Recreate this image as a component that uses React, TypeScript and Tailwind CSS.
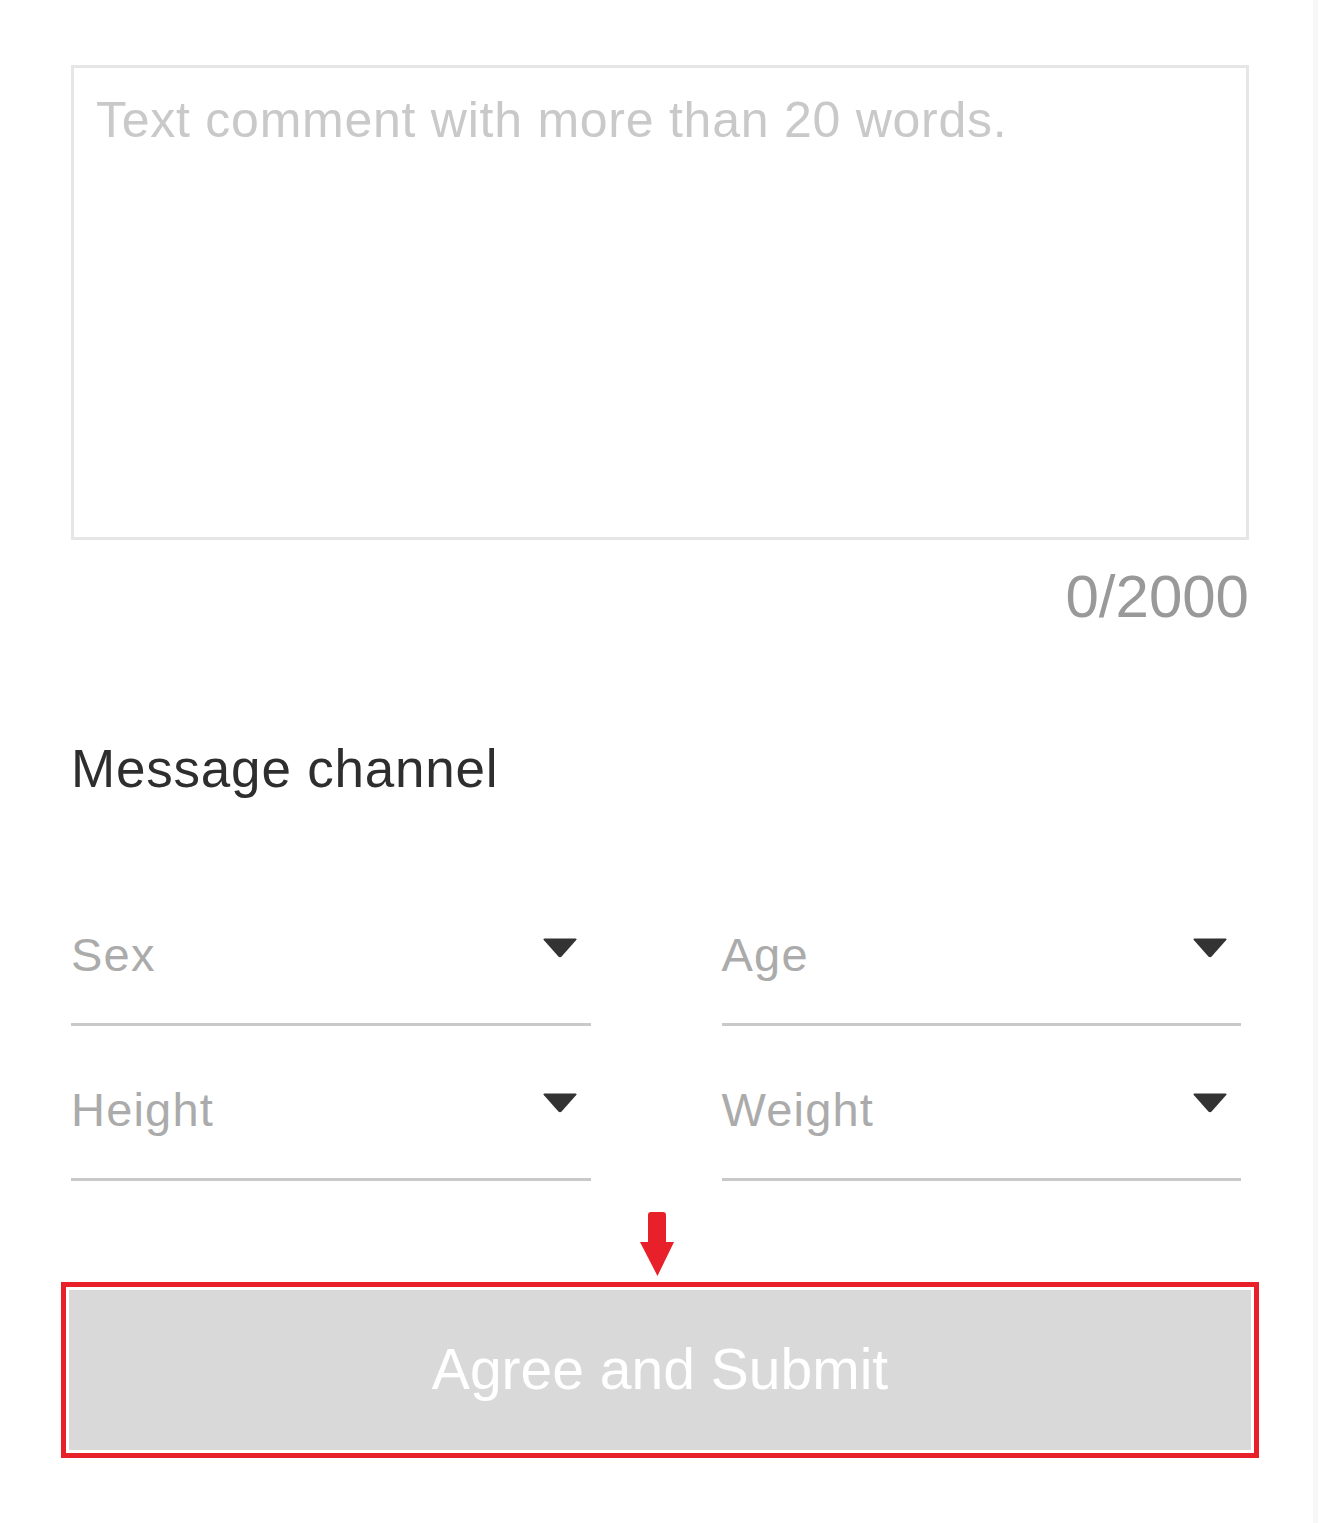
import { useState } from 'react';

const font = { fontFamily: '"Liberation Sans", Arial, Helvetica, sans-serif' };

function Caret() {
  return (
    <svg width="36" height="20" viewBox="0 0 36 20" className="shrink-0">
      <path d="M2.5 0.5 H33.5 Q35.5 0.5 34 2.2 L19.6 18.4 Q18 20 16.4 18.4 L2 2.2 Q0.5 0.5 2.5 0.5 Z" fill="#333333" />
    </svg>
  );
}

function DownArrow() {
  return (
    <svg width="34" height="64" viewBox="0 0 34 64">
      <path d="M8 3 Q8 0 11 0 H23 Q26 0 26 3 V30 H8 Z" fill="#e8202a" />
      <path d="M0 30 H34 L17.5 64 Z" fill="#e8202a" />
    </svg>
  );
}

function Select({ label }: { label: string }) {
  return (
    <div className="h-[155px] border-b-[3px] border-[#c9c9c9] pt-[56px] pr-[13px] flex items-start justify-between">
      <span className="text-[47px] leading-[1.2] tracking-[1.2px] text-[#ababab]">{label}</span>
      <div className="mt-[11px]">
        <Caret />
      </div>
    </div>
  );
}

export default function App() {
  const [comment, setComment] = useState('');

  return (
    <div className="flex min-h-[1523px] bg-white" style={font}>
      <div className="w-[1313px] pl-[71px] pt-[65px] pb-[63px]">
        <div className="w-[1178px]">
          {/* Comment box */}
          <textarea
            value={comment}
            onChange={(e) => setComment(e.target.value)}
            placeholder="Text comment with more than 20 words."
            className="block w-full h-[475px] resize-none border-[3px] border-[#e6e6e6] pl-[22px] pt-[22px] pr-[22px] text-[50px] leading-[1.2] tracking-[0.75px] text-[#333] placeholder:text-[#c9c9c9] outline-none"
          />
          <div className="mt-[21px] text-right text-[60px] leading-[1.2] text-[#999999]">
            {comment.length}/2000
          </div>

          {/* Message channel */}
          <h2 className="mt-[104px] text-[53px] leading-[1.2] tracking-[0.8px] text-[#2e2e2e]">Message channel</h2>

          <div className="mt-[70px] w-[1170px] grid grid-cols-2 gap-x-[131px]">
            <Select label="Sex" />
            <Select label="Age" />
            <Select label="Height" />
            <Select label="Weight" />
          </div>

          {/* Submit */}
          <div className="mt-[31px] flex justify-center pr-[7px]">
            <DownArrow />
          </div>
          <div className="mt-[6px] -mx-[10px] border-[5px] border-[#e8202a] p-[3px]">
            <button className="w-full h-[160px] bg-[#d9d9d9] text-white text-[57px] leading-none flex items-center justify-center">
              Agree and Submit
            </button>
          </div>
        </div>
      </div>
      <div className="w-[5px] bg-[#f7f7f7]" />
    </div>
  );
}
